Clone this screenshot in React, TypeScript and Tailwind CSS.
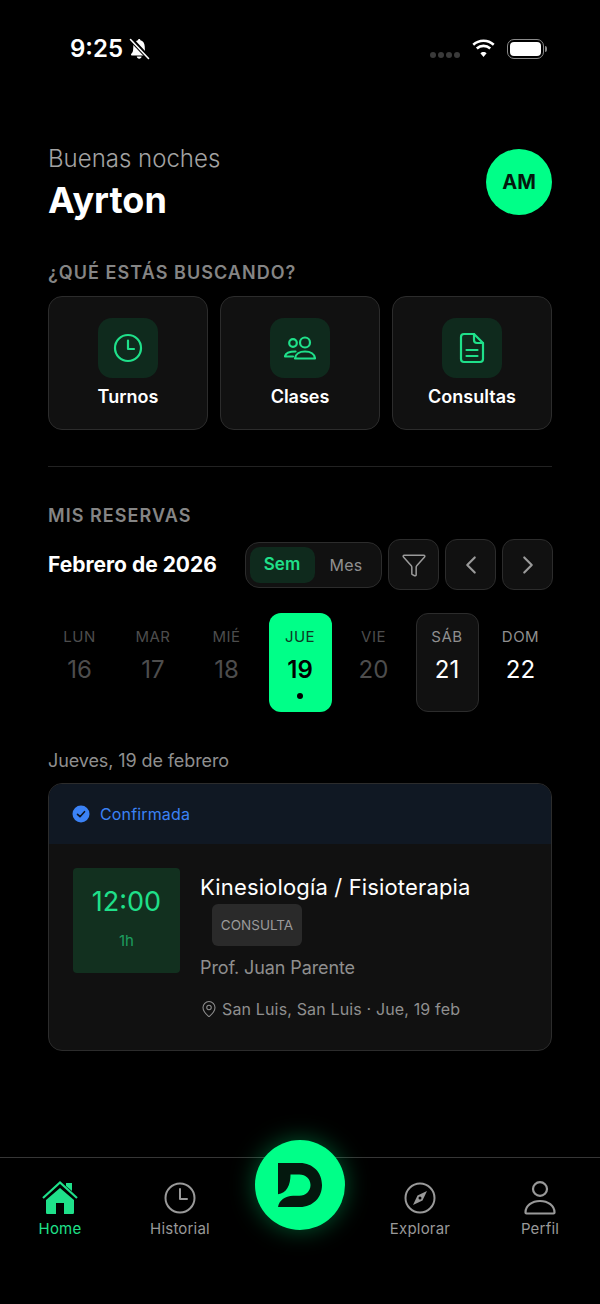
import { ChevronLeft, ChevronRight, Funnel, MapPin } from "lucide-react";

const days = [
  { label: "LUN", num: "16", state: "past" },
  { label: "MAR", num: "17", state: "past" },
  { label: "MIÉ", num: "18", state: "past" },
  { label: "JUE", num: "19", state: "selected" },
  { label: "VIE", num: "20", state: "past" },
  { label: "SÁB", num: "21", state: "today" },
  { label: "DOM", num: "22", state: "next" },
];

const StatusBar = () => (
  <div className="flex h-[98px] items-center justify-between pl-[70px] pr-[53px]">
    <div className="flex items-center gap-[5px]">
      <span className="text-[24px] leading-none font-semibold text-white">9:25</span>
      <svg width="22" height="22" viewBox="0 0 22 22" fill="white">
        <path d="M6 4.200 17.600 15.800l.2 1.700H4.200c-.8 0-1.200-.5-1.200-1 0-1 1.900-1.500 2.100-4.500l.2-3.500c0-1.700.2-3.200.7-4.300zM8 3.200C8.700 2.700 9.500 2.300 10 2.200 10.100 1.500 10.500 1 11.200 1s1.100.5 1.200 1.200c2.600.6 4.200 3 4.300 6l.2 3.500c0 .5.100.9.200 1.300zM8.800 18.500h4.800c-.2 1.300-1.100 2.200-2.400 2.200s-2.200-.9-2.400-2.200z" />
        <path d="M2.500 1.500 20.500 20.500" stroke="black" strokeWidth="3.500" />
        <path d="M2.500 1.500 20.500 20.500" stroke="white" strokeWidth="1.600" strokeLinecap="round" />
      </svg>
    </div>
    <div className="flex items-center">
      <div className="mt-[12px] flex gap-[2px]">
        <span className="size-[6px] rounded-full bg-[#3a3a3a]" />
        <span className="size-[6px] rounded-full bg-[#3a3a3a]" />
        <span className="size-[6px] rounded-full bg-[#3a3a3a]" />
        <span className="size-[6px] rounded-full bg-[#3a3a3a]" />
      </div>
      <svg className="ml-[11px]" width="25" height="20" viewBox="0 0 25 20" fill="white">
        <path d="M12.500 3c3.600 0 6.900 1.400 9.400 3.700l1.700-1.900A16.300 16.300 0 0 0 12.500.4C8.200.4 4.300 2.100 1.400 4.800l1.700 1.900A13.800 13.800 0 0 1 12.500 3z" />
        <path d="M12.500 8.200c2.200 0 4.200.8 5.800 2.200l1.800-1.900a11.300 11.300 0 0 0-15.200 0l1.800 1.900a8.700 8.700 0 0 1 5.800-2.200z" />
        <path d="M12.500 13c-1.200 0-2.300.5-3.100 1.200l3.100 3.700 3.100-3.700c-.8-.7-1.900-1.200-3.100-1.200z" />
      </svg>
      <div className="ml-[11px] flex items-center">
        <div className="flex h-[20px] w-[37px] items-center justify-center rounded-[7px] border-[1.5px] border-[#8a8a8a]">
          <div className="h-[14px] w-[31px] rounded-[4px] bg-white" />
        </div>
        <div className="ml-[1px] h-[6px] w-[2px] rounded-r-full bg-[#8a8a8a]" />
      </div>
    </div>
  </div>
);

const ClockIcon = () => (
  <svg width="30" height="30" viewBox="0 0 30 30" fill="none" stroke="#1fe08a" strokeWidth="2.200" strokeLinecap="round" strokeLinejoin="round">
    <circle cx="15" cy="15" r="13" />
    <path d="M15 7.500V16h6" />
  </svg>
);

const UsersIcon = () => (
  <svg width="32" height="32" viewBox="0 0 32 32" fill="none" stroke="#1fe08a" strokeWidth="2.200" strokeLinecap="round" strokeLinejoin="round">
    <circle cx="9" cy="11" r="3.800" />
    <circle cx="21" cy="10.500" r="5" />
    <path d="M11.500 19.500c-5.500 0-10 1.500-10.500 5H9" />
    <path d="M11 26.500c.4-4.500 4.500-7 10-7s9.600 2.500 10 7z" />
  </svg>
);

const DocIcon = () => (
  <svg width="32" height="32" viewBox="0 0 32 32" fill="none" stroke="#1fe08a" strokeWidth="2.200" strokeLinecap="round" strokeLinejoin="round">
    <path d="M18 2H8a3 3 0 0 0-3 3v22a3 3 0 0 0 3 3h16a3 3 0 0 0 3-3V11z" />
    <path d="M18 2v6a3 3 0 0 0 3 3h6" />
    <path d="M10.500 18h11M10.500 24h11" />
  </svg>
);

const CategoryCard = ({ icon, label }: { icon: React.ReactNode; label: string }) => (
  <div className="flex h-[134px] flex-col items-center rounded-[14px] border-[1.5px] border-[#2c2c2c] bg-[#111111] pt-[21px]">
    <div className="flex size-[60px] items-center justify-center rounded-[14px] bg-[#0f2a1d]">{icon}</div>
    <span className="mt-[8px] text-[18px] leading-[22px] font-semibold text-white">{label}</span>
  </div>
);

const IconButton = ({ children }: { children: React.ReactNode }) => (
  <div className="flex h-[51px] w-[51px] items-center justify-center rounded-[12px] border-[1.5px] border-[#2c2c2c] bg-[#111111]">
    {children}
  </div>
);

const DayCell = ({ label, num, state }: { label: string; num: string; state: string }) => {
  if (state === "selected") {
    return (
      <div className="flex h-[99px] flex-col items-center rounded-[12px] bg-[#00ff88] pt-[15px]">
        <span className="text-[15px] leading-[18px] tracking-[0.5px] text-[#0c3a24]">{label}</span>
        <span className="mt-[9px] text-[24px] leading-[30px] font-semibold text-black">{num}</span>
        <span className="mt-[8px] size-[6px] rounded-full bg-black" />
      </div>
    );
  }
  if (state === "today") {
    return (
      <div className="flex h-[99px] flex-col items-center rounded-[12px] border-[1.5px] border-[#2c2c2c] bg-[#111111] pt-[14px]">
        <span className="text-[15px] leading-[18px] tracking-[0.5px] text-[#8f8f8f]">{label}</span>
        <span className="mt-[9px] text-[24px] leading-[30px] text-white">{num}</span>
      </div>
    );
  }
  const muted = state === "past";
  return (
    <div className="flex h-[99px] flex-col items-center pt-[15px]">
      <span className={`text-[15px] leading-[18px] tracking-[0.5px] ${muted ? "text-[#4d4d4d]" : "text-[#8f8f8f]"}`}>{label}</span>
      <span className={`mt-[9px] text-[24px] leading-[30px] ${muted ? "text-[#4d4d4d]" : "text-white"}`}>{num}</span>
    </div>
  );
};

const NavItem = ({ icon, label, active }: { icon: React.ReactNode; label: string; active?: boolean }) => (
  <div className="flex flex-col items-center">
    <div className="flex h-[40px] w-[40px] items-center justify-center">{icon}</div>
    <span className={`mt-[1px] text-[15px] leading-[20px] tracking-[0.2px] ${active ? "text-[#1fe08a]" : "text-[#999999]"}`}>{label}</span>
  </div>
);

const HomeIcon = () => (
  <svg width="38" height="38" viewBox="0 0 38 38" fill="#1fe08a">
    <path d="M25 4h6v8l-6-5z" />
    <path d="M2 19 19 3.500 36 19" fill="none" stroke="#1fe08a" strokeWidth="2.200" />
    <path d="M19 9 33 21v12.500c0 1-.7 1.500-1.500 1.500H23V24h-8v11H6.500C5.700 35 5 34.500 5 33.500V21z" />
  </svg>
);

const HistoryIcon = () => (
  <svg width="32" height="32" viewBox="0 0 32 32" fill="none" stroke="#999999" strokeWidth="2">
    <circle cx="16" cy="16" r="14.500" />
    <path d="M16 7v10h7" strokeLinecap="round" strokeLinejoin="round" />
  </svg>
);

const CompassIcon = () => (
  <svg width="32" height="32" viewBox="0 0 32 32" fill="none" stroke="#999999" strokeWidth="2">
    <circle cx="16" cy="16" r="14.500" />
    <path d="M23 9 18.500 18.500 9 23l4.500-9.500z" fill="#999999" stroke="none" />
    <circle cx="16" cy="16" r="1.500" fill="#000000" stroke="none" />
  </svg>
);

const UserIcon = () => (
  <svg width="34" height="38" viewBox="0 0 34 38" fill="none" stroke="#999999" strokeWidth="2.200">
    <ellipse cx="17" cy="10" rx="7" ry="6.800" />
    <path d="M2.500 33.500c0-7 6.500-11.500 14.500-11.500s14.500 4.500 14.500 11.500c0 .5-.4 1-1 1h-27c-.6 0-1-.5-1-1z" />
  </svg>
);

const App = () => (
  <div className="relative flex h-[1304px] w-[600px] flex-col overflow-hidden bg-black font-['Inter',sans-serif]">
    <StatusBar />

    <div className="flex items-start justify-between px-[48px] pt-[47px]">
      <div>
        <p className="text-[24px] leading-[28px] font-light text-[#a3a3a3]">Buenas noches</p>
        <p className="mt-[6px] text-[36px] leading-[42px] font-bold text-white">Ayrton</p>
      </div>
      <div className="mt-[4px] flex size-[66px] items-center justify-center rounded-full bg-[#00ff88]">
        <span className="text-[20px] font-bold text-[#04180e]">AM</span>
      </div>
    </div>

    <div className="px-[48px]">
      <p className="mt-[41px] text-[18px] leading-[22px] font-semibold tracking-[1.050px] text-[#858585]">¿QUÉ ESTÁS BUSCANDO?</p>
      <div className="mt-[12px] grid grid-cols-3 gap-[12px]">
        <CategoryCard icon={<ClockIcon />} label="Turnos" />
        <CategoryCard icon={<UsersIcon />} label="Clases" />
        <CategoryCard icon={<DocIcon />} label="Consultas" />
      </div>

      <div className="mt-[36px] h-[1px] bg-[#222222]" />

      <p className="mt-[38px] text-[18px] leading-[22px] font-semibold tracking-[1.050px] text-[#858585]">MIS RESERVAS</p>

      <div className="mt-[12px] flex items-center">
        <span className="text-[21px] leading-[26px] font-bold text-white">Febrero de 2026</span>
        <div className="ml-auto flex h-[46px] w-[137px] items-center rounded-[14px] border-[1.5px] border-[#2c2c2c] bg-[#111111] p-[3.500px]">
          <div className="flex h-[36px] w-[65px] items-center justify-center rounded-[10px] bg-[#0f2a1d] text-[17px] font-semibold text-[#1fe08a]">Sem</div>
          <div className="flex h-[36px] flex-1 items-center justify-center text-[16px] tracking-[0.2px] text-[#8f8f8f]">Mes</div>
        </div>
        <div className="mr-[1px] ml-[6px] flex gap-[6px]">
          <IconButton><Funnel size={26} color="#9a9a9a" strokeWidth={1.400} /></IconButton>
          <IconButton><ChevronLeft size={30} color="#9a9a9a" strokeWidth={1.700} /></IconButton>
        </div>
        <div className="ml-[5px] -mr-[1px]">
          <IconButton><ChevronRight size={30} color="#9a9a9a" strokeWidth={1.700} /></IconButton>
        </div>
      </div>

      <div className="mt-[23px] grid grid-cols-7 gap-[10.500px]">
        {days.map((day) => (
          <DayCell key={day.label} {...day} />
        ))}
      </div>

      <p className="mt-[38px] text-[18px] leading-[22px] tracking-[-0.1px] text-[#8f8f8f]">Jueves, 19 de febrero</p>

      <div className="mt-[11px] overflow-hidden rounded-[14px] border-[1.5px] border-[#2c2c2c] bg-[#111111]">
        <div className="flex h-[60px] items-center gap-[10px] bg-[#101823] pl-[23px]">
          <svg width="18" height="18" viewBox="0 0 18 18">
            <circle cx="9" cy="9" r="8.500" fill="#3b82f6" />
            <path d="M5.500 9.300 8 11.700l4.500-5" fill="none" stroke="#0d1420" strokeWidth="1.600" strokeLinecap="round" strokeLinejoin="round" />
          </svg>
          <span className="text-[16px] tracking-[0.15px] text-[#3b82f6]">Confirmada</span>
        </div>
        <div className="flex h-[206px] gap-[20px] pt-[24px] pl-[24px]">
          <div className="flex h-[105px] w-[107px] flex-col items-center rounded-[4px] bg-[#12301f] pt-[18px]">
            <span className="text-[27px] leading-[32px] text-[#1fe08a]">12:00</span>
            <span className="mt-[13px] text-[15px] leading-[20px] text-[#1d9e5f]">1h</span>
          </div>
          <div className="pt-[4px]">
            <p className="text-[22px] leading-[30px] tracking-[0.15px] text-white">Kinesiología / Fisioterapia</p>
            <span className="mt-[2px] ml-[12px] flex h-[42px] w-[90px] items-center justify-center rounded-[6px] bg-[#2a2a2a] text-[13.500px] text-[#9a9a9a]">CONSULTA</span>
            <p className="mt-[10px] text-[18px] leading-[24px] tracking-[-0.1px] text-[#8f8f8f]">Prof. Juan Parente</p>
            <div className="mt-[17px] flex items-center gap-[4px]">
              <MapPin size={18} color="#8f8f8f" strokeWidth={1.400} />
              <span className="text-[16px] leading-[24px] tracking-[0.15px] text-[#8f8f8f]">San Luis, San Luis · Jue, 19 feb</span>
            </div>
          </div>
        </div>
      </div>
    </div>

    <div className="mt-auto h-[147px] border-t-[1.5px] border-[#363636] pt-[20px]">
      <div className="grid grid-cols-5">
        <NavItem icon={<HomeIcon />} label="Home" active />
        <NavItem icon={<HistoryIcon />} label="Historial" />
        <div />
        <NavItem icon={<CompassIcon />} label="Explorar" />
        <NavItem icon={<UserIcon />} label="Perfil" />
      </div>
    </div>

    <div className="absolute top-[1140px] left-[255px] flex size-[90px] items-center justify-center rounded-full bg-[#00ff88] shadow-[0_0_24px_rgba(0,255,136,0.35)]">
      <svg width="44" height="44" viewBox="115 100 130 130" fill="#04180e">
        <path d="M115 100H180C218 100 245 128 245 165C245 202 218 230 180 230H115C118 212 135 197 160 197H178C197 197 211 183 211 165C211 147 197 134 178 134H152C152 165 140 190 115 192Z" />
      </svg>
    </div>
  </div>
);

export default App;
